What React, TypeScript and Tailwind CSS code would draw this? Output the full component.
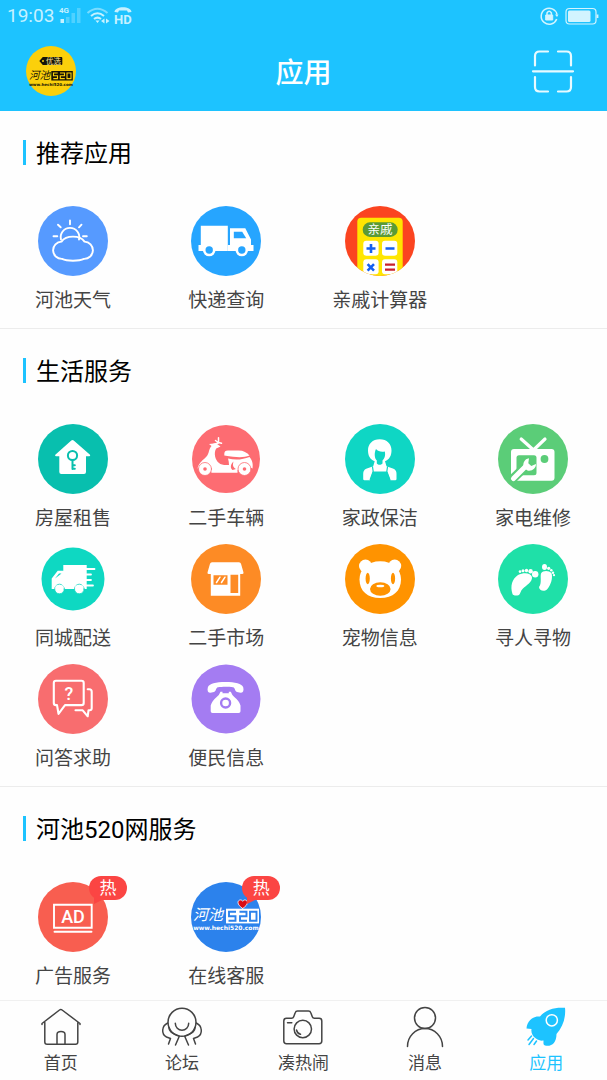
import type { ReactNode, SVGProps } from 'react';

const CJK = "font-[Roboto,'Noto_Sans_CJK_SC',sans-serif]";

function Disc({ color, r = 35, children }: { color: string; r?: number; children: ReactNode }) {
  return <svg viewBox="0 0 70 70" className="h-[70px] w-[70px]" fill="#fff" strokeLinecap="round" strokeLinejoin="round" aria-hidden="true"><circle cx="35" cy="35" r={r} fill={color} />{children}</svg>;
}

function WeatherIcon() {
  return (
    <Disc color="#569aff">
      <g fill="none" stroke="#fff" strokeWidth="1.9">
        <path d="M23 33.500a9.300 9.300 0 1 1 18 0" />
        <path d="M23.500 35.600a8.650 8.650 0 0 0 .5 17.300c5 2.400 17 2.400 22 0a8.650 8.650 0 0 0 .5-17.300c-4.500-6.600-18.500-6.600-23 0Z" />
        <path d="M15.500 30.300h3.800M20 18.700l2.700 2.600M32 14.500v3.800M43.500 18.700 41 21.300M45 30.300h3.800" />
      </g>
    </Disc>
  );
}

function ExpressIcon() {
  return (
    <Disc color="#26a5ff">
      <path d="M9.800 19.700h27V45H7.500v-6h2.300ZM39 22.300h15.300L60 33.500V39h2.500v6H39Z" />
      <path d="M36.800 39H40v6h-3.200Z" />
      <path d="M42.800 25.700h8.400l4 6.600H42.800Z" fill="#26a5ff" />
      <circle cx="18.200" cy="44" r="6.300" /><circle cx="18.200" cy="44" r="3.700" fill="#26a5ff" />
      <circle cx="50.800" cy="44" r="6.300" /><circle cx="50.800" cy="44" r="3.700" fill="#26a5ff" />
    </Disc>
  );
}

function CalculatorIcon() {
  return (
    <Disc color="#fb4420">
      <clipPath id="calc"><circle cx="35" cy="35" r="35" /></clipPath>
      <g clipPath="url(#calc)">
        <rect x="12.300" y="11.700" width="45.400" height="64" rx="4" fill="#ffe600" />
        <rect x="17.700" y="16.300" width="35" height="14.700" rx="7.300" fill="#5b9a36" />
        <rect x="18.300" y="34.700" width="15.300" height="15" rx="3" /><rect x="37" y="34.700" width="15.300" height="15" rx="3" />
        <rect x="18.300" y="53.300" width="15.300" height="15" rx="3" /><rect x="37" y="53.300" width="15.300" height="15" rx="3" />
        <path d="M21.500 42.500h9M26 38v9M40.500 42.500h9M22.600 58.200l6.400 6.400M29 58.200l-6.400 6.400" stroke="#1560f0" strokeWidth="2.600" strokeLinecap="butt" />
        <path d="M40 58.700h10M40 63.700h10" stroke="#c8202c" strokeWidth="2.300" strokeLinecap="butt" />
      </g>
      <text x="35" y="28" textAnchor="middle" fontSize="12.500">亲戚</text>
    </Disc>
  );
}

function HouseIcon() {
  return (
    <Disc color="#08bfae">
      <path d="M33.300 16.500q1.200-1 2.400 0L52 30.700q.8 1.500-1 1.500h-3V48q0 2-2 2H23.300q-2 0-2-2V32.200h-3q-1.800 0-1-1.500Z" />
      <g fill="none" stroke="#08bfae" strokeWidth="2"><circle cx="34.500" cy="31.500" r="4.600" /><path d="M34.500 36v9M34.500 41.200h2.300M34.500 44.700h2.300" /></g>
    </Disc>
  );
}

function ScooterIcon() {
  return (
    <Disc color="#fd6c72" r={34}>
      <path d="M6.500 44.500C8 38 12.500 36 15.500 32.500 18.500 29 17.500 25 20.500 22l-2.500-2 7-.8 4.500 3.300-4.300 2C22.500 29 24 36 28 39c2 1.800 5 2.300 10 2l-.3-3.500L37 34.500c8 2 15 1 21.500-1.500 3.500 4 3.500 8 3 11.500l-2.500-1V46H46.500v2.700H20.500L18 40Z" />
      <path d="M33.300 29.800q0-3.400 3.500-3.400h10.700c5 0 8.500 2 11 5.200-6 2-11.500 2.200-25.200-.1Z" />
      <path d="M22.500 20.500l5-1.500 0-5.200M27.500 18.500l3 .8M24.500 16.500l2.500 2" fill="none" stroke="#fff" strokeWidth="1.500" />
      <path d="M41.500 46c-2-1.500-2.600-5 1-8.500-1.200 4-.2 6 2.500 7.500" fill="#fd6c72" />
      <g stroke="#fd6c72" strokeWidth=".8"><circle cx="14" cy="45" r="6.500" /><circle cx="53.500" cy="45" r="6.500" /></g>
      <circle cx="14" cy="45" r="1.800" fill="#fd6c72" /><circle cx="53.500" cy="45" r="1.800" fill="#fd6c72" />
    </Disc>
  );
}

function HousekeeperIcon() {
  return (
    <Disc color="#0fd6c4">
      <path d="M34.700 15.300C42 15.300 46.500 20 46.500 26.500c0 5-2 9-6.500 10.800l1.500 4.900 7 2.500q3 1.300 3 5V55q0 1.300-1.300 1.300h-4.700L42 47.500H27.800L25 56.300h-5.500q-1.300 0-1.300-1.300v-5.300q0-3.700 3-5l7-2.500 1.500-5C25 35.500 23 31.500 23 26.500c0-6.500 4.500-11.200 11.700-11.200Z" />
      <path d="M31 25c2 2.500 5 3 8.800 2.500 1 4-.5 7.500-2.300 9v3c-1.500 1.800-4.300 1.800-5.700 0v-3C29.500 34.500 29 29 31 25Z" fill="#0fd6c4" />
      <path d="M27.500 42.800l.7 4.700-3 8M42.500 42.800l-.7 4.700 3 8" fill="none" stroke="#0fd6c4" strokeWidth="1.200" />
    </Disc>
  );
}

function RepairIcon() {
  return (
    <Disc color="#5bcd78">
      <rect x="13" y="25" width="43.500" height="31.700" rx="3" />
      <path d="M23.200 15 35.500 26 47 15" fill="none" stroke="#fff" strokeWidth="3.200" />
      <rect x="18.500" y="31.300" width="20" height="20" rx="2.500" fill="#5bcd78" />
      <circle cx="46.500" cy="35" r="3.900" fill="#5bcd78" />
      <path d="M14 55.500 28 42" stroke="#5bcd78" strokeWidth="9" strokeLinecap="butt" />
      <path d="M15.500 54.500 28 42" stroke="#fff" strokeWidth="5" />
      <path d="M26 44c-1.800-4.500.5-9.300 5-9.800l-.7 5 3 2.800 4.700-2c0 4.500-4 7.500-8.500 6.500Z" />
    </Disc>
  );
}

function DeliveryIcon() {
  return (
    <Disc color="#0ed8c2" r={31.5}>
      <path d="M25.300 21h23.400v24H13.700V34.500l6-7.800h5.600Z" />
      <path d="M17 34.500l4-5h2.500Z" fill="#0ed8c2" />
      <path d="M48 25h8.500M48 30.500h5M48 36h5M48 41.500h7" stroke="#fff" strokeWidth="1.800" />
      <g stroke="#0ed8c2" strokeWidth=".8"><circle cx="21.500" cy="45" r="4.800" /><circle cx="41.300" cy="45" r="4.800" /></g>
      <path d="M17.500 41.500h8v3h-8ZM37.300 41.500h8v3h-8Z" />
    </Disc>
  );
}

function ShopIcon() {
  return (
    <Disc color="#fd8b25">
      <path d="M21 18.300h27q1.500 0 2 1.500l2.500 8.700q.2 1.500-1.300 1.500h-2v21.700H19.800V30h-2q-1.500 0-1.300-1.500L19 19.800q.5-1.500 2-1.500Z" />
      <path d="M22.500 31.300h14v9.500h-14ZM39.500 30.700h7.700V49h-7.700Z" fill="#fd8b25" />
      <path d="M25.500 38.500l3.500-5.300M30.500 38.500l3.500-5.300" stroke="#fff" strokeWidth="1.500" />
    </Disc>
  );
}

function BearIcon() {
  return (
    <Disc color="#ff9300">
      <circle cx="20.500" cy="22" r="6.500" /><circle cx="49.700" cy="22" r="6.500" />
      <path d="M35.200 17.200C48 17.200 56 25 56 35.500 56 47 48 54 35.200 54S14.500 47 14.500 35.500c0-10.500 8-18.300 20.700-18.300Z" />
      <g fill="#ff9300"><ellipse cx="22.700" cy="34.500" rx="2.100" ry="5.700" /><ellipse cx="48" cy="34.500" rx="2.100" ry="5.700" /><ellipse cx="35.300" cy="45" rx="10.300" ry="6.700" /></g>
      <ellipse cx="35.300" cy="42" rx="4" ry="1.300" />
    </Disc>
  );
}

function FeetIcon() {
  return (
    <Disc color="#1fe0a8">
      <path d="M14.500 50C12 42 14 35 20 31c6-3 13-2 14 2 .5 5-5.500 8-9.500 12-2 2-2 4.500-3.500 6-3 1-6 .5-6.500-1Z" />
      <circle cx="37.200" cy="30.300" r="3.200" /><circle cx="32.600" cy="27.300" r="2.200" /><circle cx="28.500" cy="26.500" r="1.700" /><circle cx="25" cy="26.700" r="1.500" /><circle cx="22" cy="27.600" r="1.300" />
      <path d="M41 43c3-4 1-10 2-13.500 2-3.500 8-3 10.500-.5 1.500 5-.5 12-4.500 16.500-3 2.500-8 1-8-2.500Z" />
      <ellipse cx="46.500" cy="23" rx="2.500" ry="3" /><circle cx="50.700" cy="24.300" r="1.600" /><circle cx="53.300" cy="26.300" r="1.300" /><circle cx="55" cy="28.700" r="1.200" /><circle cx="56" cy="31.200" r="1.100" />
    </Disc>
  );
}

function QuestionIcon() {
  return (
    <Disc color="#f86d6f">
      <g fill="none" stroke="#fff" strokeWidth="2.100">
        <path d="M18 16.700h25.500q2.200 0 2.200 2.200v20q0 2.200-2.200 2.200H27l-6.500 8.700L19 41.100h-1q-2.200 0-2.200-2.200v-20q0-2.200 2.200-2.200Z" />
        <path d="M49.700 25.300h1.500q2.500 0 2.500 2.500v16.500q0 2-2 2h-1.200l-.8 6-5-6H37.500" />
      </g>
      <text x="31" y="35.500" textAnchor="middle" fontSize="18" fontWeight="500">?</text>
    </Disc>
  );
}

function PhoneIcon() {
  return (
    <Disc color="#a47cf2" r={34.5}>
      <path d="M16.800 23.500C18 19.500 25 18 34.500 18s16.500 1.500 17.800 5.500c.7 3.500-.3 5.300-2.800 5.300l-3.500-.8c-2.500-1-1.500-4-4-4.700-4-.8-11-.8-15 0-2.500.7-1.500 3.700-4 4.700l-3.500.8c-2.500 0-3.500-1.800-2.700-5.300Z" />
      <path d="M29.500 27.800h2v1.500h6.300v-1.500h2q1 3 3.500 5.200 5 4 6.200 8.500v5.700q0 1.700-1.800 1.700H21.500q-1.800 0-1.800-1.700v-5.700q1.200-4.500 6-8.500 2.800-2.200 3.800-5.200Z" />
      <circle cx="34.600" cy="39" r="4.500" fill="#fff" stroke="#a47cf2" strokeWidth="2.400" />
    </Disc>
  );
}

function AdIcon() {
  return (
    <Disc color="#f85e50">
      <path d="M16 22.700h37.700v23H16ZM16.500 49.700H53.500" fill="none" stroke="#fff" strokeWidth="1.900" strokeLinejoin="miter" />
      <text x="35" y="40.500" textAnchor="middle" fontSize="18" fontWeight="500">AD</text>
    </Disc>
  );
}

function SiteIcon() {
  return (
    <Disc color="#2c82ec">
      <text x="2" y="37.500" fontSize="15" fontStyle="italic">河池</text>
      <rect x="35" y="26.700" width="33" height="14.700" />
      <path d="M45 29.700h-7v4.500h6.500v4.500h-7M48.500 29.700h7v4.500h-6.500v4.500h7M59 29.700h6.500v9H59Z" fill="none" stroke="#2c82ec" strokeWidth="1.900" strokeLinecap="butt" strokeLinejoin="miter" />
      <text x="35" y="48" textAnchor="middle" fontSize="6" fontWeight="700" fontFamily="DejaVu Sans">www.hechi520.com</text>
      <path d="M51.700 26.500c-3-2.300-4.700-3.800-4.700-6 0-2.800 3.500-3.500 4.700-1.200 1.200-2.300 4.700-1.600 4.700 1.200 0 2.200-1.700 3.700-4.700 6Z" fill="#d90d16" stroke="#fff" strokeWidth=".8" />
    </Disc>
  );
}

function Avatar() {
  return (
    <svg viewBox="0 0 50 50" className="h-[50px] w-[50px]" aria-hidden="true">
      <circle cx="25" cy="25" r="25" fill="#fbd00b" />
      <path d="M13.300 15l3.500-4h18.500q1 0 1 1v6q0 1-1 1H16.800Z" fill="#171407" /><circle cx="17" cy="15" r="1" fill="#fbd00b" />
      <text x="27.500" y="17.800" textAnchor="middle" fontSize="7.500" fill="#fbe9a0">优选</text>
      <text x="3" y="33" fontSize="10.500" fontStyle="italic" fill="#171407">河池</text>
      <rect x="25.300" y="25" width="21.500" height="9.500" fill="#171407" />
      <path d="M31.700 27h-4.200v2.800h4v2.800h-4.200M34 27h4.500v2.800h-4.200v2.800h4.500M41 27h4v5.600h-4Z" fill="none" stroke="#fbd00b" strokeWidth="1.100" />
      <text x="25" y="39.500" textAnchor="middle" fontSize="4" fontWeight="700" fontFamily="DejaVu Sans" fill="#171407">www.hechi520.com</text>
    </svg>
  );
}

function ScanIcon() {
  return <svg viewBox="0 0 42 42" className="h-[42px] w-[42px] overflow-visible" fill="none" stroke="#e8faff" strokeWidth="2.200" strokeLinecap="round"><path d="M3 15.500V6q0-4.500 4.500-4.500H16M26 1.500h8.500Q39 1.500 39 6v9.500M39 27v10q0 4.500-4.500 4.500H26M16 41.500H7.500Q3 41.500 3 37V27M1 21.300h40" /></svg>;
}

function SignalIcons() {
  return (
    <svg viewBox="0 0 74 22" className="h-[22px] w-[74px] overflow-visible" fill="#c6f1ff" aria-hidden="true">
      <text x="-1" y="8" fontSize="8" fontWeight="700">4G</text>
      <rect x="0.500" y="14" width="3.500" height="4" />
      <g opacity=".3"><rect x="6" y="12" width="3.500" height="6" /><rect x="11.500" y="8" width="3.500" height="10" /><rect x="17" y="3" width="3.500" height="15" /></g>
      <g fill="none" stroke="#c6f1ff" strokeWidth="2"><path d="M27.500 8q10-8.500 20 0" opacity=".55" /><path d="M31 11q6.500-5.500 13 0M34 14q3.500-2.800 7 0" /></g>
      <path d="M35.500 15.500h4l-2 2.500ZM44.500 13.500v5l-3.500-2.500ZM46 13.500v5l3.500-2.500Z" />
      <path d="M54.500 7c0-6.500 17-6.500 17 0l-3.500.5-1-2h-8l-1 2Z" />
      <text x="54" y="19" fontSize="13" fontWeight="700">HD</text>
    </svg>
  );
}

function BatteryIcons() {
  return (
    <svg viewBox="0 0 60 20" className="h-5 w-[60px]" fill="#d2f4ff" stroke="#d2f4ff" aria-hidden="true">
      <path d="M17.700 13A8 8 0 1 1 18 8.500" fill="none" strokeWidth="1.500" />
      <path d="M6.700 9h7v5h-7Z" /><path d="M8 9V7q2.200-3.300 4.400 0v2" fill="none" strokeWidth="1.500" /><path d="M16 8.500h3.500L18 11Z" stroke="none" />
      <rect x="27" y="2.500" width="30" height="15.500" rx="3.500" fill="none" strokeWidth="1.200" />
      <rect x="29" y="4.500" width="22.500" height="11.500" rx="1.500" stroke="none" />
      <path d="M58.500 8.500v3.500" strokeWidth="1.800" />
    </svg>
  );
}

function TabSvg(props: SVGProps<SVGSVGElement>) {
  return <svg viewBox="0 0 40 40" className="h-10 w-10 overflow-visible" fill="none" stroke="currentColor" strokeWidth="1.500" strokeLinecap="round" strokeLinejoin="round" aria-hidden="true" {...props} />;
}

function HomeTab() {
  return <TabSvg><path d="M1 17.500v-1L18.500 3q1.300-1 2.600 0L39 16.500v1M3.800 15.500V35q0 2.300 2.300 2.300h28.400q2.300 0 2.300-2.300V15.500M16 37V27.500q0-3 4-3t4 3V37" /></TabSvg>;
}

function ForumTab() {
  return <TabSvg><circle cx="20" cy="15.300" r="14" /><path d="M13.300 16.300a6.700 7 0 0 0 13.400 0M5.700 16C-.5 19-1 27 4.500 30l4 1.500L6.500 37M7 20.500c0 6 6 6 10.300 8.700L13.500 38M34.300 16c6.200 3 6.700 11 1.200 14l-4 1.500 2 5.500M33 20.500c0 6-6 6-10.300 8.700l3.800 8.800" /></TabSvg>;
}

function CameraTab() {
  return <TabSvg><path d="M3.500 11.300h5q1.700 0 2.200-1.500l1.500-4q.6-1.800 2.300-1.800h11q1.700 0 2.300 1.800l1.500 4q.5 1.500 2.200 1.500h4.600q2.700 0 2.700 2.700v20q0 2.700-2.700 2.700H3.500Q.8 36.700.8 34V14q0-2.700 2.700-2.700ZM4.500 15.700h4.300M13.500 23q.8 3.500 4 4.300" /><circle cx="19.800" cy="22" r="8.700" /></TabSvg>;
}

function UserTab() {
  return <TabSvg><circle cx="20" cy="11" r="10.500" /><path d="M2.500 39.500a17.500 18 0 0 1 35 0" /></TabSvg>;
}

function RocketTab() {
  return (
    <TabSvg>
      <path d="M39 .8C30 0 20 2 14 9.500 7 8.500 1 14 .5 21.500l5 .5c-.7 3.500 1 7.500 4.500 9.500 2.500 1.800 5 2.500 7.500 2 0 2.500-.5 4.500 1.500 5 6 1.500 11.500-2 11.500-11.500C37 20 40 10 39 .8Z" fill="currentColor" stroke="none" />
      <circle cx="25.800" cy="13.300" r="5.600" stroke="#fff" />
      <path d="M5.500 29l-3.500 4M7.500 31.500l-4.500 6M10.500 34l-2.500 3.500" />
    </TabSvg>
  );
}

interface AppItem {
  name: string;
  icon: () => ReactNode;
  hot?: boolean;
}

const sections: { title: string; items: AppItem[] }[] = [
  {
    title: '推荐应用',
    items: [
      { name: '河池天气', icon: WeatherIcon },
      { name: '快递查询', icon: ExpressIcon },
      { name: '亲戚计算器', icon: CalculatorIcon },
    ],
  },
  {
    title: '生活服务',
    items: [
      { name: '房屋租售', icon: HouseIcon },
      { name: '二手车辆', icon: ScooterIcon },
      { name: '家政保洁', icon: HousekeeperIcon },
      { name: '家电维修', icon: RepairIcon },
      { name: '同城配送', icon: DeliveryIcon },
      { name: '二手市场', icon: ShopIcon },
      { name: '宠物信息', icon: BearIcon },
      { name: '寻人寻物', icon: FeetIcon },
      { name: '问答求助', icon: QuestionIcon },
      { name: '便民信息', icon: PhoneIcon },
    ],
  },
  {
    title: '河池520网服务',
    items: [
      { name: '广告服务', icon: AdIcon, hot: true },
      { name: '在线客服', icon: SiteIcon, hot: true },
    ],
  },
];

const tabs = [
  { name: '首页', icon: HomeTab },
  { name: '论坛', icon: ForumTab },
  { name: '凑热闹', icon: CameraTab },
  { name: '消息', icon: UserTab },
  { name: '应用', icon: RocketTab, active: true },
];

function HotBadge() {
  return (
    <span className="absolute -top-1.5 left-[51px] flex h-6 w-[38px] items-center justify-center rounded-xl bg-[#fb4543] text-[17px] leading-6 text-white">
      <svg viewBox="0 0 10 8" className="absolute left-1 top-5 h-2 w-2.5" fill="#fb4543" aria-hidden="true"><path d="M1 0v8l8-4V0Z" /></svg>
      <span className="relative">热</span>
    </span>
  );
}

function AppSection({ title, items }: { title: string; items: AppItem[] }) {
  return (
    <section className="border-b border-[#ececec] pb-[13px] pt-[27px] last:border-b-0 last:pb-0">
      <h2 className="flex h-8 items-center gap-2.5 pl-[23px] text-2xl leading-8 text-black">
        <span className="-mt-1 h-[25px] w-[3px] bg-[#1dc3ff]" />
        {title}
      </h2>
      <div className="mt-9 grid grid-cols-[repeat(4,96px)] justify-between gap-y-[11px] pl-[25px] pr-[26px]">
        {items.map((item) => (
          <a key={item.name} href="#" className="flex flex-col items-center">
            <span className="relative block">
              <item.icon />
              {item.hot && <HotBadge />}
            </span>
            <span className="mt-[11px] whitespace-nowrap text-[19px] leading-7 text-[#444]">{item.name}</span>
          </a>
        ))}
      </div>
    </section>
  );
}

export default function App() {
  return (
    <div className={`flex min-h-screen flex-col bg-[#fefefe] ${CJK}`}>
      <header className="bg-[#1dc3ff]">
        <div className="flex h-[31px] items-center justify-between pl-[7px] pr-2">
          <div className="flex items-center gap-1.5">
            <span className="text-[19px] leading-6 text-[#c6f1ff]">19:03</span>
            <SignalIcons />
          </div>
          <BatteryIcons />
        </div>
        <div className="grid h-20 grid-cols-[1fr_auto_1fr] items-center px-[26px]">
          <a href="#" aria-label="河池520"><Avatar /></a>
          <h1 className="pt-1.5 text-[28px] font-medium leading-10 text-white">应用</h1>
          <button type="button" aria-label="扫一扫" className="justify-self-end pr-[7px]"><ScanIcon /></button>
        </div>
      </header>

      <main className="flex-1">
        {sections.map((section) => (
          <AppSection key={section.title} title={section.title} items={section.items} />
        ))}
      </main>

      <nav className="grid h-20 grid-cols-5 border-t border-[#f0f0f0] pt-1.5">
        {tabs.map((tab) => (
          <a key={tab.name} href="#" aria-current={tab.active ? 'page' : undefined} className={`flex flex-col items-center gap-1 ${tab.active ? 'text-[#1dc3ff]' : 'text-[#444]'}`}>
            <tab.icon />
            <span className="text-[17px] leading-6">{tab.name}</span>
          </a>
        ))}
      </nav>
    </div>
  );
}
